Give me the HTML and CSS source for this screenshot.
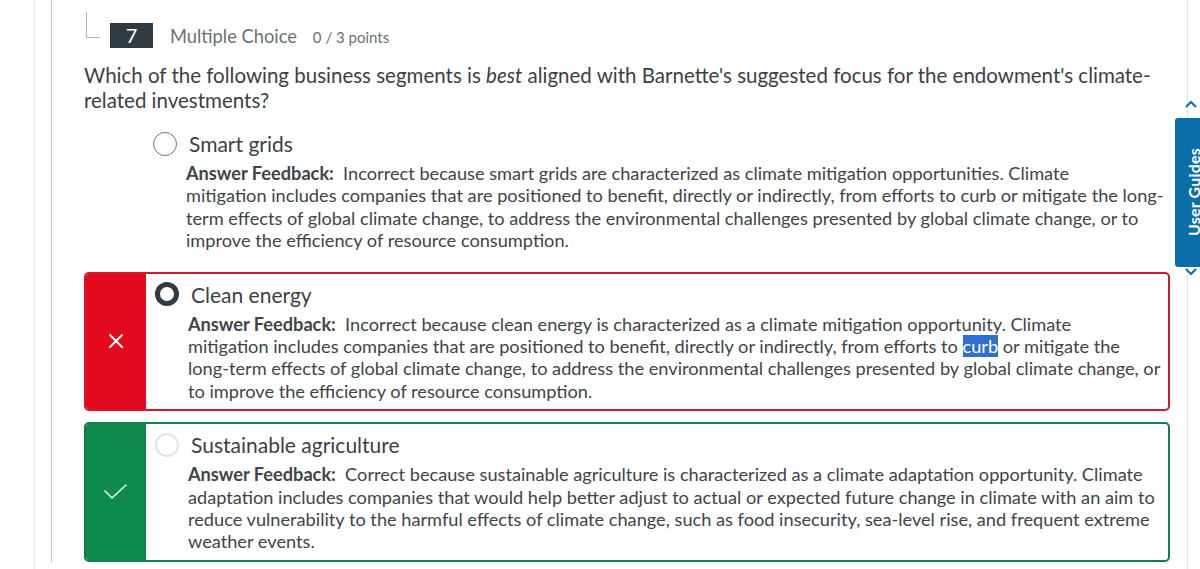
FILE: index.html
```html
<!DOCTYPE html>
<html lang="en">
<head>
<meta charset="utf-8">
<title>Question 7</title>
<link rel="stylesheet" href="styles.css">
</head>
<body>
<div class="page">
  <div class="gutter"></div>
  <div class="main-wrap">
    <div class="col">
      <div class="qhead">
        <span class="connector"></span>
        <span class="qnum">7</span>
        <span class="qtype">Multiple Choice</span>
        <span class="qpoints">0 / 3 points</span>
      </div>
      <p class="qtext">Which of the following business segments is <em>best</em> aligned with Barnette's suggested focus for the endowment's climate-related investments?</p>
      <ul class="options">
        <li class="opt plain">
          <div class="mark"></div>
          <div class="opt-body">
            <div class="opt-label"><span class="radio radio-empty"></span><span>Smart grids</span></div>
            <p class="feedback"><strong>Answer Feedback:</strong>&nbsp; Incorrect because smart grids are characterized as climate mitigation opportunities. Climate<br>mitigation includes companies that are positioned to benefit, directly or indirectly, from efforts to curb or mitigate the long-<br>term effects of global climate change, to address the environmental challenges presented by global climate change, or to<br>improve the efficiency of resource consumption.</p>
          </div>
        </li>
        <li class="opt wrong">
          <div class="mark">
            <svg width="16" height="16" viewBox="0 0 16 16" aria-hidden="true"><path d="M2 2 L14 14 M14 2 L2 14" stroke="#fff" stroke-width="2" fill="none" stroke-linecap="round"/></svg>
          </div>
          <div class="opt-body">
            <div class="opt-label"><span class="radio radio-chosen"></span><span>Clean energy</span></div>
            <p class="feedback"><strong>Answer Feedback:</strong>&nbsp; Incorrect because clean energy is characterized as a climate mitigation opportunity. Climate<br>mitigation includes companies that are positioned to benefit, directly or indirectly, from efforts to <span class="sel">curb</span> or mitigate the<br>long-term effects of global climate change, to address the environmental challenges presented by global climate change, or<br>to improve the efficiency of resource consumption.</p>
          </div>
        </li>
        <li class="opt right">
          <div class="mark">
            <svg width="24" height="16" viewBox="0 0 24 16" aria-hidden="true"><path d="M1 7 L8 14 L22 1" stroke="#e8f5ee" stroke-width="1.6" fill="none" stroke-linecap="round" stroke-linejoin="round"/></svg>
          </div>
          <div class="opt-body">
            <div class="opt-label"><span class="radio radio-light"></span><span>Sustainable agriculture</span></div>
            <p class="feedback"><strong>Answer Feedback:</strong>&nbsp; Correct because sustainable agriculture is characterized as a climate adaptation opportunity. Climate<br>adaptation includes companies that would help better adjust to actual or expected future change in climate with an aim to<br>reduce vulnerability to the harmful effects of climate change, such as food insecurity, sea-level rise, and frequent extreme<br>weather events.</p>
          </div>
        </li>
      </ul>
    </div>
  </div>
  <aside class="rail">
    <svg class="chev chev-up" width="12" height="8" viewBox="0 0 12 8" aria-hidden="true"><path d="M1 7 L6 2 L11 7" stroke="#0a6ea8" stroke-width="2" fill="none"/></svg>
    <div class="guide-tab"><span class="guide-text">User Guides</span></div>
    <svg class="chev chev-down" width="12" height="8" viewBox="0 0 12 8" aria-hidden="true"><path d="M1 1 L6 6 L11 1" stroke="#0a6ea8" stroke-width="2" fill="none"/></svg>
  </aside>
</div>
</body>
</html>
```

FILE: styles.css
```css
* { box-sizing: border-box; }
html, body { margin: 0; padding: 0; background: #fff; }
body {
  font-family: Lato, "Open Sans", "Liberation Sans", sans-serif;
  color: #404448;
  overflow: hidden;
}
.page { display: flex; height: 569px; }
.gutter { width: 35px; flex: none; border-right: 1px solid #e8e8e8; }
.main-wrap { flex: 1; padding-left: 16px; padding-right: 17px; }
.col {
  border-left: 1px solid #c9c9c9;
  padding-left: 32px;
  padding-top: 12px;
  height: 562px;
}
.qhead { display: flex; align-items: flex-start; height: 36px; }
.connector {
  width: 14px; height: 26px; margin-left: 2px;
  border-left: 1px solid #b5b5b5; border-bottom: 1px solid #b5b5b5;
}
.qnum {
  margin-left: 10px; margin-top: 11px;
  width: 43px; height: 25px;
  background: #2f3a43; color: #fff;
  font-size: 20px; line-height: 25px; text-align: center;
}
.qtype { margin-left: 17px; margin-top: 12px; font-size: 18.3px; line-height: 25px; color: #6b7075; }
.qpoints { margin-left: 16px; margin-top: 13px; font-size: 15px; line-height: 25px; color: #6b7075; }
.qtext { margin: 15px 0 0; font-size: 20.5px; line-height: 25px; color: #3c4044; }
.qtext em { font-style: italic; }
.options { list-style: none; margin: 8px 0 0; padding: 0; }
.opt {
  display: flex;
  border: 2px solid transparent;
  border-radius: 5px;
  margin-bottom: 11px;
  overflow: hidden;
}
.opt.plain { border-width: 0; padding: 2px 0; }
.opt.wrong { border-color: #d3182b; }
.opt.right { border-color: #137f4b; }
.mark { width: 60px; flex: none; display: flex; align-items: center; justify-content: center; }
.opt.wrong .mark { background: #e30a1e; }
.opt.right .mark { background: #0f8a4d; }
.opt-body { flex: 1; padding: 8px 2px 7px 9px; }
.opt-label { display: flex; align-items: center; font-size: 21px; line-height: 25px; color: #3c4044; }
.radio { width: 24px; height: 24px; border-radius: 50%; flex: none; margin-right: 12px; }
.radio-empty { border: 1px solid #6f7478; }
.radio-chosen { border: 5px solid #2f3a43; }
.radio-light { border: 2px solid #e3e3e3; }
.feedback { margin: 6px 0 0 33px; font-size: 18.2px; line-height: 22.4px; color: #404448; }
.feedback strong { font-weight: 700; }
.sel { background: #2f6fd1; color: #fff; }
.rail { width: 13px; flex: none; border-left: 1px solid #e6e6e6; position: relative; }
.chev { position: absolute; left: -3px; }
.chev-up { top: 100px; }
.chev-down { top: 268px; }
.guide-tab {
  position: absolute; left: -13px; top: 118px;
  width: 36px; height: 149px;
  background: #0a6ea8; border-radius: 3px;
  display: flex; align-items: center; justify-content: center;
}
.guide-text {
  writing-mode: vertical-rl; transform: rotate(180deg);
  color: #fff; font-weight: 700; font-size: 16px; letter-spacing: 0.2px;
}
```
